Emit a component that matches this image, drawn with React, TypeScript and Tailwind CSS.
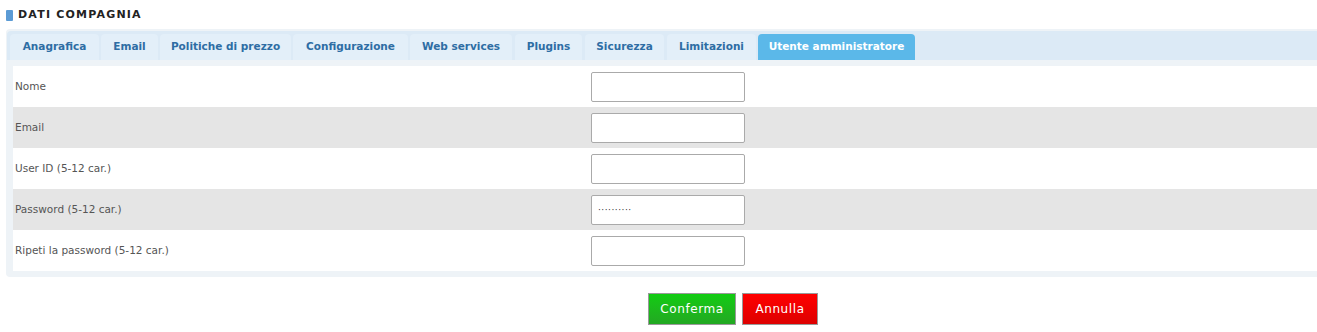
import React from "react";

const tabs = [
  { label: "Anagrafica", w: "w-[89px]" },
  { label: "Email", w: "w-[57px]" },
  { label: "Politiche di prezzo", w: "w-[131px]" },
  { label: "Configurazione", w: "w-[115px]" },
  { label: "Web services", w: "w-[102px]" },
  { label: "Plugins", w: "w-[67px] ml-[1px]" },
  { label: "Sicurezza", w: "w-[79px] ml-[1px]" },
  { label: "Limitazioni", w: "w-[89px] ml-[1px]" },
  { label: "Utente amministratore", w: "w-[157px]" },
];

const fields = [
  { label: "Nome", value: "" },
  { label: "Email", value: "" },
  { label: "User ID (5-12 car.)", value: "" },
  { label: "Password (5-12 car.)", value: "··········" },
  { label: "Ripeti la password (5-12 car.)", value: "" },
];

export default function App() {
  const active = tabs.length - 1;

  return (
    <div className="w-[1317px] h-[332px] overflow-hidden bg-white font-['DejaVu_Sans',sans-serif]">
      {/* Titolo */}
      <div className="flex items-center h-[29px] pl-[6px] pt-[2px]">
        <span className="w-[7px] h-[11px] rounded-[1px] bg-[#5b9bd5]" />
        <h1 className="ml-[5px] text-[11px] font-bold tracking-[1.2px] text-[#222]">
          DATI COMPAGNIA
        </h1>
      </div>

      {/* Pannello */}
      <div className="ml-[6px] bg-[#eef3f7] rounded-l-[4px] pt-[2px] pb-[6px]">
        <ul className="flex gap-[2px] ml-[1px] pt-[3px] pl-[3px] bg-[#dceaf6] rounded-tl-[4px]">
          {tabs.map((t, i) => (
            <li
              key={t.label}
              className={`${t.w} h-[26px] flex items-center justify-center rounded-t-[4px] text-[10.5px] font-bold ${
                i === active ? "bg-[#5bb8e9] text-white" : "bg-[#e3eff9] text-[#2e6da4]"
              }`}
            >
              {t.label}
            </li>
          ))}
        </ul>

        <div className="mt-[6px] ml-[7px]">
          {fields.map((f, i) => (
            <div
              key={f.label}
              className={`h-[41px] flex items-center ${i % 2 === 1 ? "bg-[#e5e5e5]" : "bg-white"}`}
            >
              <label className="w-[578px] pl-[2px] text-[10.5px] text-[#555]">{f.label}</label>
              <input
                type="text"
                readOnly
                value={f.value}
                className="w-[154px] h-[30px] bg-white border border-[#aaa] rounded-[2px] px-[6px] text-[9px] tracking-[0.5px] text-[#333] outline-none"
              />
            </div>
          ))}
        </div>
      </div>

      {/* Pulsanti */}
      <div className="flex gap-[6px] mt-[16px] pl-[648px]">
        <button className="w-[88px] h-[32px] border border-[#999] bg-gradient-to-b from-[#11cc11] to-[#22a822] text-white text-[12px] tracking-[0.6px]">
          Conferma
        </button>
        <button className="w-[76px] h-[32px] border border-[#999] bg-gradient-to-b from-[#ff0000] to-[#dd0000] text-white text-[12px] tracking-[0.6px]">
          Annulla
        </button>
      </div>
    </div>
  );
}
